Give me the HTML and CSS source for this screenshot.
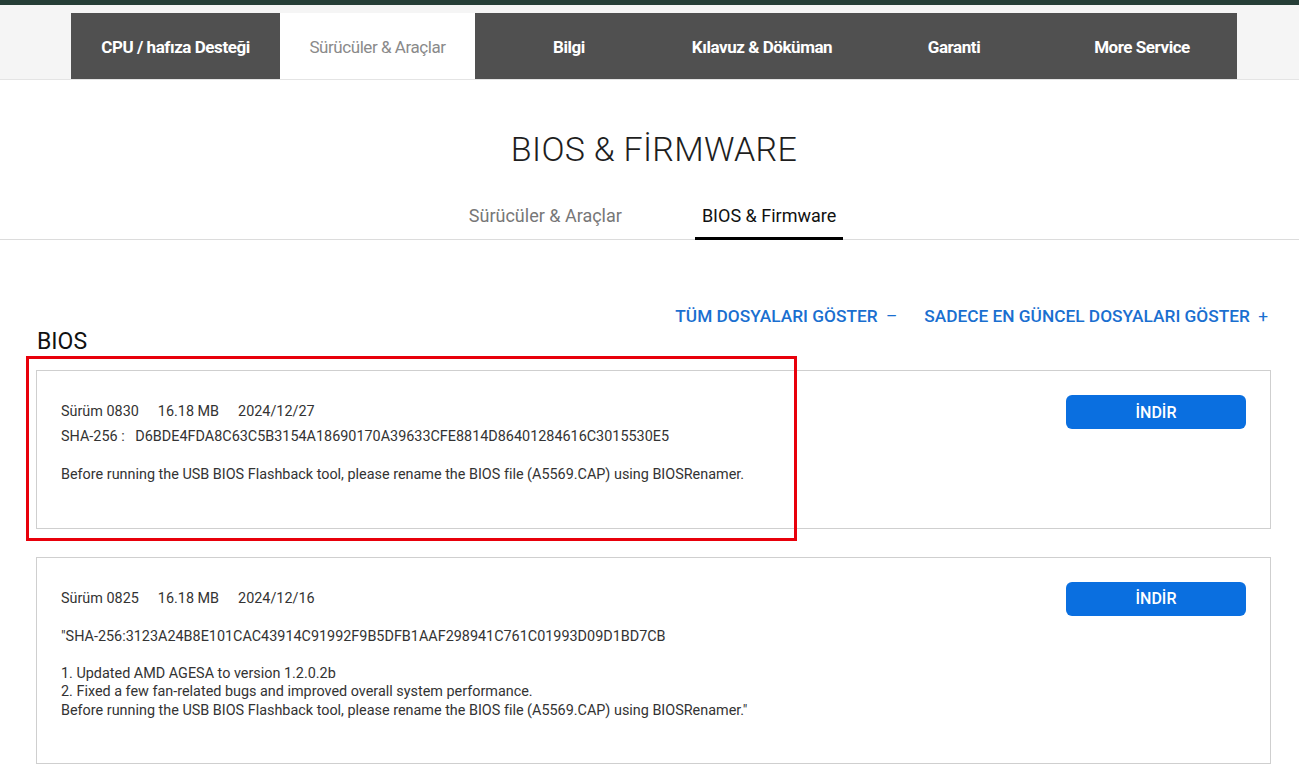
FILE: index.html
```html
<!DOCTYPE html>
<html lang="tr">
<head>
<meta charset="UTF-8">
<meta name="viewport" content="width=device-width, initial-scale=1.0">
<title>BIOS &amp; Firmware</title>
<link rel="stylesheet" href="styles.css">
</head>
<body>

<!-- Top strip -->
<div class="top-strip"></div>

<!-- Product menu -->
<div class="menu-band">
  <nav class="menu">
    <a class="menu-item w-cpu" href="#">CPU / hafıza Desteği</a>
    <a class="menu-item w-drv active" href="#">Sürücüler &amp; Araçlar</a>
    <a class="menu-item w-info" href="#">Bilgi</a>
    <a class="menu-item w-man" href="#">Kılavuz &amp; Döküman</a>
    <a class="menu-item w-war" href="#">Garanti</a>
    <a class="menu-item w-more" href="#">More Service</a>
  </nav>
</div>

<h1 class="page-title">BIOS &amp; FİRMWARE</h1>

<div class="sub-tabs">
  <a class="sub-tab" href="#">Sürücüler &amp; Araçlar</a>
  <a class="sub-tab current" href="#">BIOS &amp; Firmware</a>
</div>

<div class="content">

  <div class="filter-links">
    <a href="#">TÜM DOSYALARI GÖSTER <span class="sign">–</span></a>
    <a href="#">SADECE EN GÜNCEL DOSYALARI GÖSTER <span class="sign">+</span></a>
  </div>

  <h2 class="group-title">BIOS</h2>

  <div class="file-card">
    <div class="file-info">
      <div class="meta"><span>Sürüm 0830</span><span>16.18 MB</span><span>2024/12/27</span></div>
      <div class="meta">SHA-256 :&nbsp;&nbsp; D6BDE4FDA8C63C5B3154A18690170A39633CFE8814D86401284616C3015530E5</div>
      <p class="desc">Before running the USB BIOS Flashback tool, please rename the BIOS file (A5569.CAP) using BIOSRenamer.</p>
    </div>
    <button class="download">İNDİR</button>
  </div>

  <div class="file-card">
    <div class="file-info">
      <div class="meta"><span>Sürüm 0825</span><span>16.18 MB</span><span>2024/12/16</span></div>
      <p class="desc">"SHA-256:3123A24B8E101CAC43914C91992F9B5DFB1AAF298941C761C01993D09D1BD7CB

1. Updated AMD AGESA to version 1.2.0.2b
2. Fixed a few fan-related bugs and improved overall system performance.
Before running the USB BIOS Flashback tool, please rename the BIOS file (A5569.CAP) using BIOSRenamer."</p>
    </div>
    <button class="download">İNDİR</button>
  </div>

</div>

<!-- highlight frame drawn over the first file -->
<div class="highlight"></div>

</body>
</html>
```

FILE: styles.css
```css
body {
margin: 0;
font-family: Roboto, "Noto Sans", Arial, sans-serif;
color: #222;
background: #fff;
}

a {
text-decoration: none;
}

.top-strip {
height: 5px;
background-color: #263e37;
}

.menu-band {
background-color: #f5f5f5;
padding-top: 8px;
border-bottom: 1px solid #e4e4e4;
}

.menu {
display: flex;
margin-left: 71px;
}

.menu-item {
display: flex;
align-items: center;
justify-content: center;
height: 66px;
padding-top: 1px;
box-sizing: border-box;
background-color: #505050;
color: #fff;
font-size: 17px;
font-weight: 700;
letter-spacing: -0.45px;
}

.menu-item.active {
background-color: #fff;
color: #8a8a8a;
font-weight: 400;
}

.w-cpu { width: 209px; }
.w-drv { width: 195px; }
.w-info { width: 188px; }
.w-man { width: 198px; }
.w-war { width: 186px; }
.w-more { width: 190px; }

.page-title {
margin: 50px 0 0;
padding-left: 9px;
text-align: center;
font-size: 34px;
font-weight: 300;
line-height: 38px;
color: #1e1e1e;
letter-spacing: 0.3px;
}

.sub-tabs {
display: flex;
justify-content: center;
gap: 66px;
margin-top: 35px;
padding-left: 6px;
border-bottom: 1px solid #dcdcdc;
}

.sub-tab {
padding: 1px 7px 9px;
font-size: 18px;
line-height: 24px;
color: #777;
border-bottom: 3px solid transparent;
margin-bottom: -1px;
}

.sub-tab.current {
color: #111;
border-bottom-color: #000;
}

.content {
padding: 0 28px 0 36px;
}

.filter-links {
display: flex;
justify-content: flex-end;
gap: 27px;
margin-top: 64px;
padding-right: 3px;
}

.filter-links a {
color: #1a6fd0;
font-size: 17.3px;
font-weight: 500;
line-height: 24px;
}

.filter-links .sign {
margin-left: 4px;
font-weight: 400;
}

.group-title {
margin: 0 0 0 1px;
font-size: 23px;
font-weight: 400;
line-height: 28px;
color: #111;
}

.file-card {
display: flex;
justify-content: space-between;
align-items: flex-start;
border: 1px solid #cfcfcf;
padding: 24px 24px 43px;
margin-top: 14px;
margin-bottom: 28px;
}

.file-card + .file-card {
margin-top: 0;
}

.file-info {
padding-top: 4px;
font-size: 14.4px;
color: #333;
}

.meta {
line-height: 25px;
}

.meta span {
margin-right: 19px;
}

.desc {
margin: 17px 0 0;
line-height: 18.5px;
white-space: pre-line;
}

.download {
width: 180px;
height: 34px;
border: none;
border-radius: 6px;
background-color: #0a6fe0;
color: #fff;
font-family: inherit;
font-size: 16px;
font-weight: 500;
cursor: pointer;
}

.highlight {
position: absolute;
left: 26px;
top: 356px;
width: 765px;
height: 179px;
border: 3px solid #e8000b;
}
```
